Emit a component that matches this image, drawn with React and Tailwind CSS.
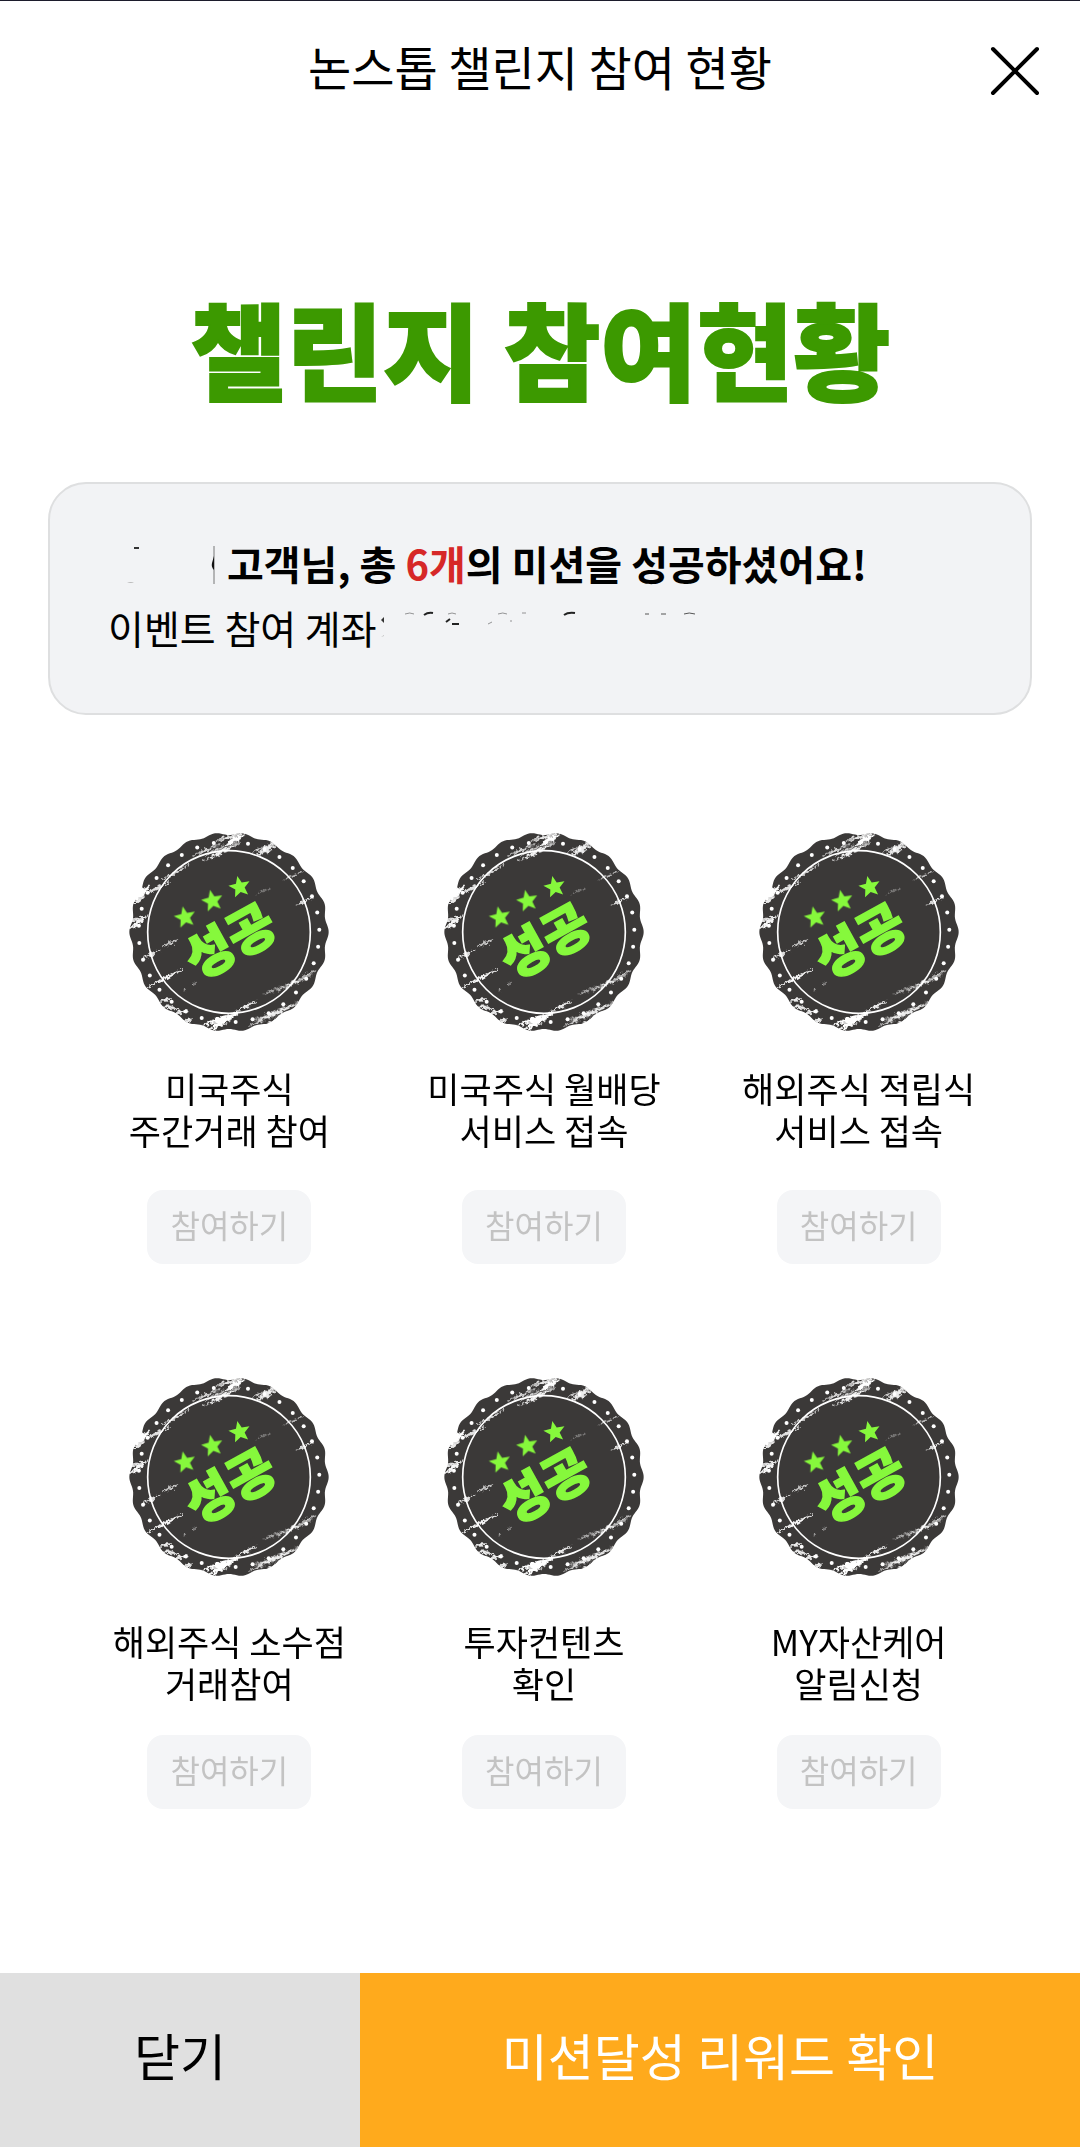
import React from "react";

const MISSIONS = [
  [
    { lines: ["미국주식", "주간거래 참여"] },
    { lines: ["미국주식 월배당", "서비스 접속"] },
    { lines: ["해외주식 적립식", "서비스 접속"] },
  ],
  [
    { lines: ["해외주식 소수점", "거래참여"] },
    { lines: ["투자컨텐츠", "확인"] },
    { lines: ["MY자산케어", "알림신청"] },
  ],
];

const SEAL_EDGE = Array.from({ length: 312 }, (_, i) => {
  const a = (i / 312) * Math.PI * 2;
  const r = 295 + 4 * Math.cos(22 * a);
  return `${(300 + r * Math.cos(a)).toFixed(1)},${(300 + r * Math.sin(a)).toFixed(1)}`;
}).join(" ");

const SEAL_DOTS = Array.from({ length: 33 }, (_, i) => {
  const a = ((i * 360) / 33 - 1.5) * (Math.PI / 180);
  return [300 + 271 * Math.cos(a), 300 + 271 * Math.sin(a)];
});

/* x1, y1, x2, y2, thickness, opacity */
const SCRATCHES = [
  [190, 72, 275, 36, 5, 0.8],
  [222, 88, 335, 30, 9, 0.95],
  [228, 70, 300, 36, 5, 0.8],
  [285, 42, 352, 4, 15, 1],
  [262, 26, 340, 2, 7, 0.9],
  [376, 72, 446, 38, 11, 0.9],
  [396, 52, 444, 30, 9, 0.9],
  [370, 60, 400, 46, 4, 0.8],
  [96, 146, 186, 94, 6, 0.75],
  [52, 184, 122, 150, 7, 0.85],
  [12, 206, 62, 162, 18, 1],
  [10, 218, 50, 192, 8, 0.9],
  [-2, 292, 58, 250, 10, 0.95],
  [0, 270, 50, 252, 6, 0.85],
  [40, 380, 94, 354, 6, 0.85],
  [100, 344, 150, 322, 6, 0.7],
  [54, 468, 162, 410, 5, 0.95],
  [194, 456, 199, 453, 5, 0.5],
  [165, 476, 169, 474, 4, 0.5],
  [92, 508, 128, 500, 8, 0.9],
  [100, 522, 150, 530, 9, 0.9],
  [128, 546, 178, 536, 8, 0.9],
  [160, 570, 196, 560, 7, 0.9],
  [222, 580, 300, 548, 11, 1],
  [236, 596, 334, 536, 19, 1],
  [320, 536, 384, 508, 6, 0.9],
  [402, 488, 452, 466, 5, 0.6],
  [444, 474, 546, 430, 7, 0.9],
  [512, 438, 560, 416, 4, 0.8],
  [362, 580, 516, 508, 11, 0.9],
  [396, 590, 504, 532, 11, 0.95],
  [372, 564, 440, 540, 4, 0.8],
  [502, 220, 554, 194, 4, 0.9],
  [464, 144, 520, 118, 4, 0.65],
  [384, 184, 424, 168, 4, 0.35],
];

function Star({ x, y }) {
  const points = Array.from({ length: 10 }, (_, i) => {
    const a = ((i * 36 - 90) * Math.PI) / 180;
    const r = i % 2 ? 15 : 34;
    return `${(r * Math.cos(a)).toFixed(1)},${(r * Math.sin(a)).toFixed(1)}`;
  }).join(" ");
  return <polygon points={points} transform={`translate(${x} ${y}) rotate(-12)`} fill="#86f83c" />;
}

function SuccessSeal() {
  return (
    <svg viewBox="0 0 600 600" className="size-[200px]" role="img" aria-label="성공">
      <defs>
        <filter id="rough" filterUnits="userSpaceOnUse" x="-20" y="-20" width="640" height="640">
          <feTurbulence type="fractalNoise" baseFrequency="0.09" numOctaves="3" seed="4" result="n" />
          <feDisplacementMap in="SourceGraphic" in2="n" scale="18" xChannelSelector="R" yChannelSelector="G" />
        </filter>
      </defs>
      <polygon points={SEAL_EDGE} fill="#3b3938" />
      <circle cx="300" cy="300" r="244" fill="none" stroke="#fff" strokeWidth="5" />
      {SEAL_DOTS.map(([x, y], i) => (
        <circle key={i} cx={x} cy={y} r="6" fill="#fff" />
      ))}
      <g filter="url(#rough)" fill="#fff">
        {SCRATCHES.map(([x1, y1, x2, y2, w, o], i) => {
          const mx = (x1 + x2) / 2;
          const my = (y1 + y2) / 2;
          return (
            <path
              key={i}
              opacity={o}
              d={`M${x1} ${y1}L${mx - w / 3} ${my - w / 2}L${x2} ${y2}L${mx + w / 3} ${my + w / 2}Z`}
              stroke="#fff"
              strokeWidth="2"
            />
          );
        })}
      </g>
      <Star x={168} y={256} />
      <Star x={250} y={207} />
      <Star x={332} y={165} />
      <text
        transform="translate(304 328) rotate(-29)"
        y="56"
        textAnchor="middle"
        fontSize="154"
        fontWeight="900"
        fill="#86f83c"
        stroke="#86f83c"
        strokeWidth="5"
      >
        성공
      </text>
    </svg>
  );
}

function Mission({ lines, low }) {
  return (
    <li className="flex flex-col items-center">
      <SuccessSeal />
      <p
        className={`flex flex-col items-center text-[35px] leading-[42px] whitespace-nowrap text-black ${
          low ? "mt-[43px] mb-[31px]" : "mt-[35px] mb-[39px]"
        }`}
      >
        <span className="block">{lines[0]}</span>
        <span className="block">{lines[1]}</span>
      </p>
      <button
        type="button"
        disabled
        className="h-[74px] w-[164px] rounded-2xl bg-[#f4f5f7] pb-1.5 text-[32px] leading-[48px] text-[#c3c3c3]"
      >
        참여하기
      </button>
    </li>
  );
}

export default function App() {
  return (
    <div className="flex min-h-screen flex-col border-t border-[#1c1c2c] bg-white font-['Noto_Sans_CJK_KR','Noto_Sans',sans-serif] text-black">
      <header className="grid h-[140px] grid-cols-[1fr_auto_1fr] items-center px-10">
        <h1 className="col-start-2 pb-2.5 text-[47px] leading-[64px]">논스톱 챌린지 참여 현황</h1>
        <button type="button" aria-label="닫기" className="justify-self-end">
          <svg viewBox="0 0 50 50" className="size-[50px]" stroke="#000" strokeWidth="4" strokeLinecap="round">
            <path d="M3 3L47 47M47 3L3 47" />
          </svg>
        </button>
      </header>

      <main className="flex flex-col">
        <h2 className="mt-[135px] text-center text-[105px] leading-[140px] font-black text-[#3c9900] [-webkit-text-stroke:2px_#3c9900]">
          챌린지 참여현황
        </h2>

        <section className="mx-12 mt-[66px] h-[233px] rounded-[38px] border-2 border-[#dedfe0] bg-[#f2f3f5] px-[58px] pt-[47px] text-[39px] leading-[64px]">
          <p className="flex items-center text-[40px] font-bold whitespace-nowrap">
            <svg viewBox="0 0 119 44" className="h-11 w-[119px]" aria-hidden="true">
              <path d="M26 6h5v2h-5z" fill="#333" />
              <path d="M19 42q4-2 7 0z" fill="#bbb" />
              <path d="M106 5v38" stroke="#777" strokeWidth="1" />
              <path d="M106 15v14q-3-3-2-7z" fill="#111" />
            </svg>
            <span>
              고객님, 총 <span className="text-[#d62828]">6개</span>의 미션을 성공하셨어요!
            </span>
          </p>
          <p className="flex items-center whitespace-nowrap">
            <span>이벤트 참여 계좌</span>
            <svg viewBox="0 0 330 44" className="h-11 w-[330px]" aria-hidden="true">
              <path d="M4 15l3-3v6z" fill="#333" />
              <path d="M4 32l3-2v1z" fill="#bbb" />
              <g fill="none" stroke="#555" strokeWidth="1">
                <path d="M28 9q5-2 9 0M71 9q4-2 8 0M121 9q5-2 9 0M111 19l4-2M134 15v2M145 8h4" opacity="0.6" />
                <path d="M47 10q4-3 9-2M69 17l4-3M75 19h7" stroke="#222" strokeWidth="2" />
                <path d="M187 10q4-3 11-2" stroke="#222" strokeWidth="2" />
                <path d="M268 9h4M284 9h5M307 9q5-2 11 0" />
              </g>
            </svg>
          </p>
        </section>

        <section className="mt-[117px] flex flex-col gap-[113px] pr-[64px] pl-[72px] pb-20">
          {MISSIONS.map((row, r) => (
            <ul key={r} className="grid grid-cols-3">
              {row.map((m) => (
                <Mission key={m.lines[0] + m.lines[1]} lines={m.lines} low={r === 1} />
              ))}
            </ul>
          ))}
        </section>
      </main>

      <footer className="mt-auto mb-px grid h-[174px] grid-cols-3 text-[50px]">
        <button type="button" className="bg-[#e0e0e0] pb-3 text-black">
          닫기
        </button>
        <button type="button" className="col-span-2 bg-[#ffaa1c] pb-3 text-white">
          미션달성 리워드 확인
        </button>
      </footer>
    </div>
  );
}
